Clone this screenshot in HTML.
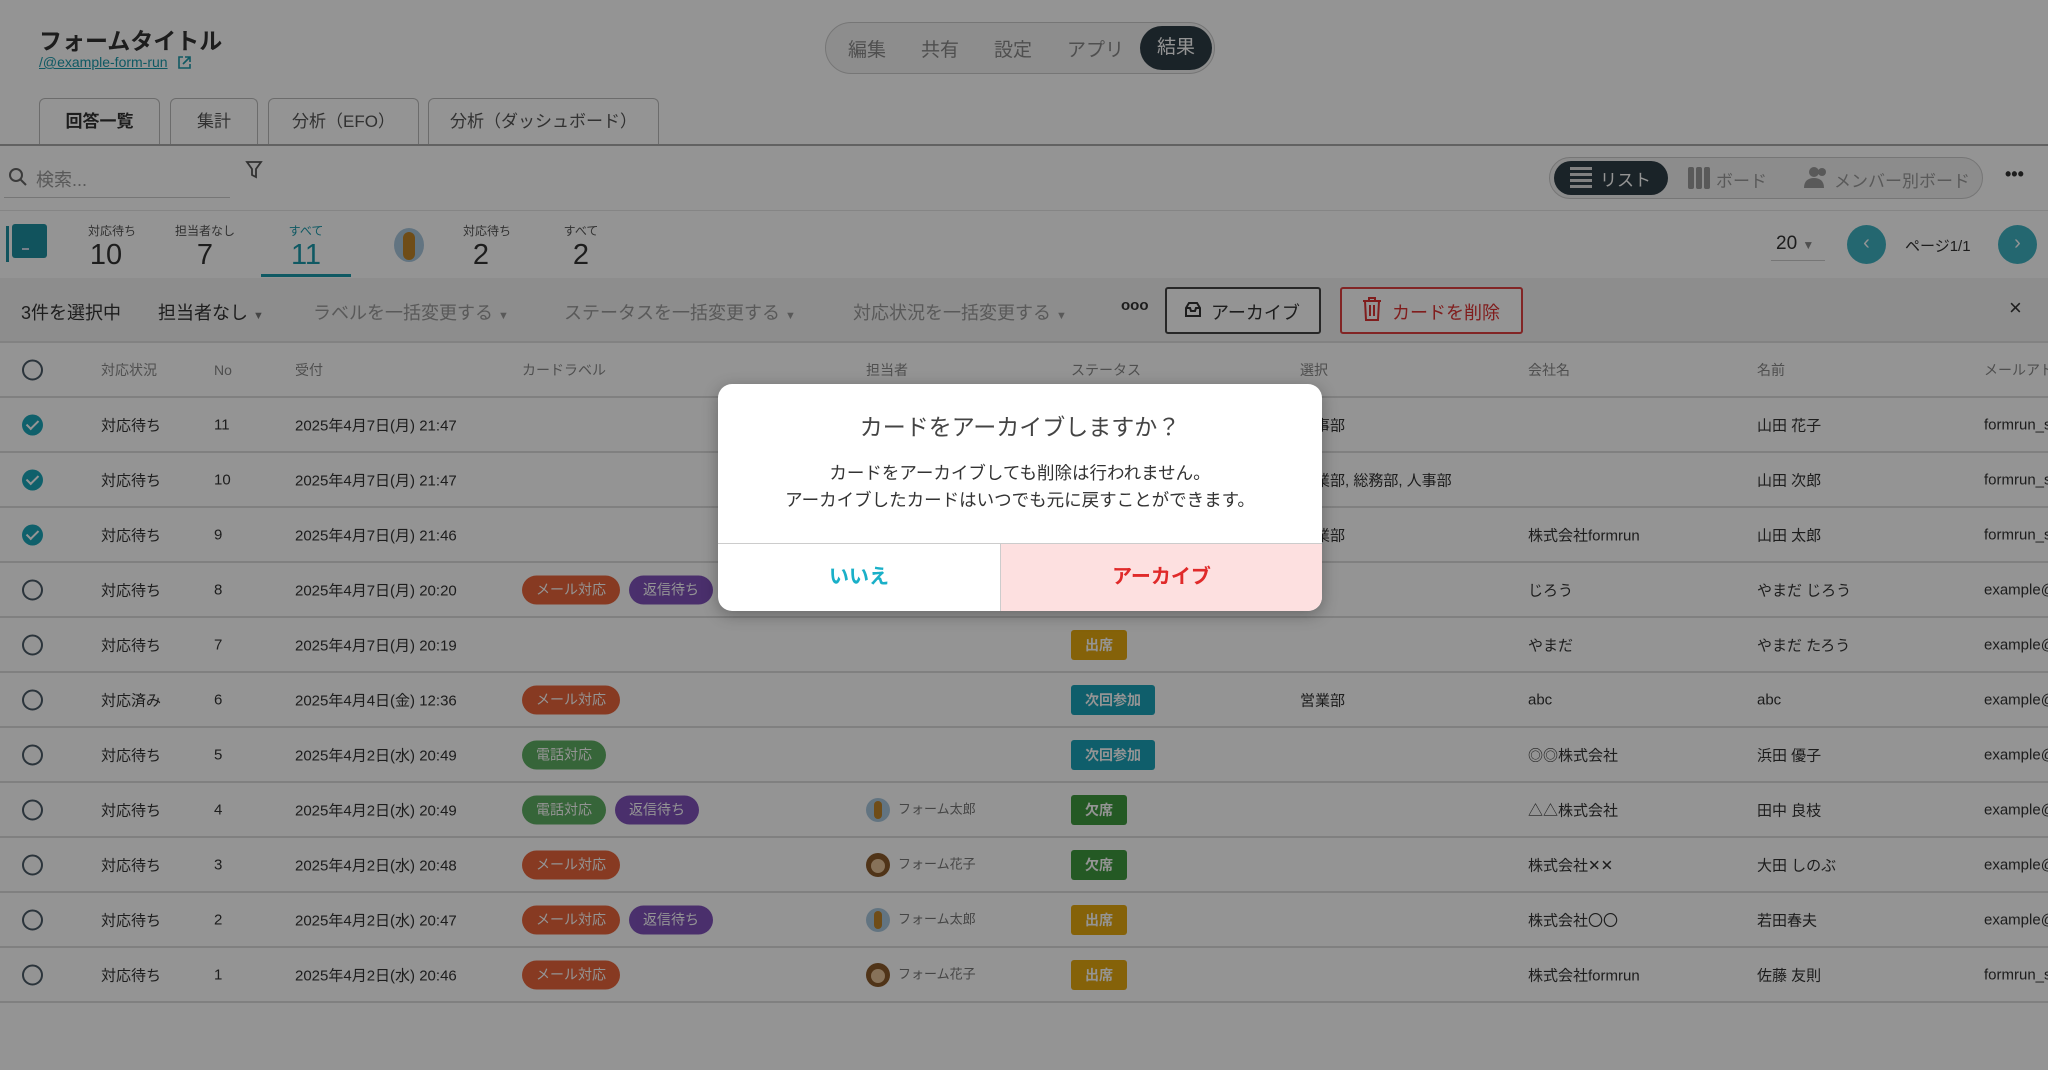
<!DOCTYPE html>
<html><head><meta charset="utf-8"><style>
*{box-sizing:border-box;margin:0;padding:0}
body{width:2048px;height:1070px;overflow:hidden;background:#fff;font-family:"Liberation Sans","Noto Sans CJK JP",sans-serif;color:#333;position:relative}
.a{position:absolute;white-space:nowrap}
.tab{position:absolute;top:98px;height:47px;border:1px solid #bbb;border-bottom:none;border-radius:6px 6px 0 0;background:transparent;font-size:17px;color:#555;text-align:center;line-height:46px}
.row{position:absolute;left:0;width:2048px;height:55px;border-bottom:2px solid #ddd;font-size:15px;color:#333}
.row .a{top:50%;transform:translateY(-50%)}
.chk{width:21px;height:21px;border:2px solid #4a5a66;border-radius:50%}
.chk.on{border:none;background:#1aa6b8}
.chk.on:after{content:"";position:absolute;left:7px;top:3px;width:5px;height:10px;border:solid #fff;border-width:0 2.5px 2.5px 0;transform:rotate(45deg)}
.pl{display:inline-block;height:29px;line-height:29px;border-radius:15px;color:#fff;font-size:14px;padding:0 14px;margin-right:9px;opacity:.85}
.m{background:#e64a19}.r{background:#6a35b0}.t{background:#43a047}
.st{height:30px;line-height:30px;border-radius:3px;color:#fff;font-size:14px;padding:0 14px;font-weight:bold}
.y{background:#e6aa10}.b{background:#1aa3b8}.g{background:#3f9a3f}
.av{width:24px;height:24px;border-radius:50%;display:inline-block;vertical-align:middle;margin-right:8px;position:relative}
.gi{background:#aac9df}.gi:after{content:"";position:absolute;left:8px;top:3px;width:8px;height:18px;border-radius:4px;background:#c0862a}
.mo{background:#8a5a2a}.mo:after{content:"";position:absolute;left:5px;top:6px;width:14px;height:14px;border-radius:50%;background:#e8c49a}
.pers{font-size:13px;color:#777}
.h{font-size:14px;color:#888}
</style></head><body>
<div class="a" style="left:39px;top:22px;font-size:23px;font-weight:bold;color:#333">フォームタイトル</div>
<div class="a" style="left:39px;top:54px;font-size:14px;color:#1a9aab;text-decoration:underline">/@example-form-run</div>
<svg class="a" style="left:177px;top:55px" width="15" height="15" viewBox="0 0 15 15" fill="none" stroke="#1a9aab" stroke-width="1.6"><path d="M6 2H2v11h11V9M8 2h5v5M13 2L6 9"/></svg>
<div class="a" style="left:825px;top:22px;width:390px;height:52px;border:1px solid #ccc;border-radius:26px;background:#f3f3f3"></div>
<div class="a" style="left:848px;top:35px;font-size:19px;color:#888">編集</div>
<div class="a" style="left:921px;top:35px;font-size:19px;color:#888">共有</div>
<div class="a" style="left:994px;top:35px;font-size:19px;color:#888">設定</div>
<div class="a" style="left:1067px;top:35px;font-size:19px;color:#888">アプリ</div>
<div class="a" style="left:1140px;top:26px;width:72px;height:44px;border-radius:22px;background:#2e3d45;color:#fff;font-size:19px;text-align:center;line-height:44px">結果</div>
<div class="tab" style="left:39px;width:121px;background:#fff;color:#333;font-weight:bold;height:48px">回答一覧</div>
<div class="tab" style="left:170px;width:88px">集計</div>
<div class="tab" style="left:268px;width:151px">分析（EFO）</div>
<div class="tab" style="left:428px;width:231px">分析（ダッシュボード）</div>
<div class="a" style="left:0;top:144px;width:2048px;height:2px;background:#aaa"></div>
<svg class="a" style="left:8px;top:167px" width="20" height="20" viewBox="0 0 20 20" fill="none" stroke="#666" stroke-width="2"><circle cx="8" cy="8" r="6"/><path d="M12.5 12.5L18 18"/></svg>
<div class="a" style="left:36px;top:166px;font-size:18px;color:#999">検索...</div>
<div class="a" style="left:4px;top:197px;width:226px;height:1px;background:#ccc"></div>
<svg class="a" style="left:245px;top:160px" width="18" height="20" viewBox="0 0 18 20" fill="none" stroke="#555" stroke-width="1.8"><path d="M2 2h14l-5 7v8l-4-2V9z"/></svg>
<div class="a" style="left:1549px;top:157px;width:434px;height:42px;border:1px solid #ccc;border-radius:21px;background:#f1f1f1"></div>
<div class="a" style="left:1554px;top:161px;width:114px;height:34px;border-radius:17px;background:#2e3d45"></div>
<svg class="a" style="left:1570px;top:166px" width="22" height="24" viewBox="0 0 22 24" fill="#ddd"><rect y="1" width="22" height="3"/><rect y="7" width="22" height="3"/><rect y="13" width="22" height="3"/><rect y="19" width="22" height="3"/></svg>
<div class="a" style="left:1600px;top:166px;font-size:17px;color:#fff">リスト</div>
<svg class="a" style="left:1688px;top:167px" width="22" height="22" viewBox="0 0 22 22" fill="#999"><rect width="6" height="22" rx="2"/><rect x="8" width="6" height="22" rx="2"/><rect x="16" width="6" height="22" rx="2"/></svg>
<div class="a" style="left:1716px;top:167px;font-size:17px;color:#999">ボード</div>
<svg class="a" style="left:1804px;top:166px" width="26" height="24" viewBox="0 0 26 24" fill="#999"><circle cx="10" cy="6" r="5"/><path d="M0 22c0-7 4-10 10-10s10 3 10 10z"/><circle cx="18" cy="6" r="4"/></svg>
<div class="a" style="left:1834px;top:167px;font-size:17px;color:#999">メンバー別ボード</div>
<div class="a" style="left:2005px;top:164px;font-size:18px;font-weight:bold;color:#333">•••</div>
<div class="a" style="left:0;top:210px;width:2048px;height:1px;background:#e5e5e5"></div>
<div class="a" style="left:6px;top:226px;width:3px;height:36px;background:#1e8fa0"></div>
<div class="a" style="left:12px;top:224px;width:35px;height:34px;background:#1e8fa0;border-radius:3px"></div>
<div class="a" style="left:22px;top:248px;width:7px;height:2px;background:#cde"></div>
<div class="a" style="left:88px;top:222px;text-align:center;width:36px;font-size:12px;color:#555">対応待ち<br><span style="font-size:29px;color:#333;line-height:32px">10</span></div>
<div class="a" style="left:173px;top:222px;text-align:center;width:64px;font-size:12px;color:#555">担当者なし<br><span style="font-size:29px;color:#333;line-height:32px">7</span></div>
<div class="a" style="left:286px;top:222px;text-align:center;width:40px;font-size:12px;color:#1a9aab">すべて<br><span style="font-size:29px;line-height:32px">11</span></div>
<div class="a" style="left:261px;top:274px;width:90px;height:3px;background:#1a9aab"></div>
<div class="a" style="left:394px;top:228px;width:30px;height:34px;border-radius:50%;background:#aac9df"></div>
<div class="a" style="left:403px;top:232px;width:12px;height:28px;border-radius:6px;background:#c0862a"></div>
<div class="a" style="left:463px;top:222px;text-align:center;width:36px;font-size:12px;color:#555">対応待ち<br><span style="font-size:29px;color:#333;line-height:32px">2</span></div>
<div class="a" style="left:563px;top:222px;text-align:center;width:36px;font-size:12px;color:#555">すべて<br><span style="font-size:29px;color:#333;line-height:32px">2</span></div>
<div class="a" style="left:1776px;top:233px;font-size:19px;color:#333">20 <span style="font-size:12px;color:#888">▼</span></div>
<div class="a" style="left:1771px;top:260px;width:54px;height:1px;background:#ccc"></div>
<div class="a" style="left:1847px;top:225px;width:39px;height:39px;border-radius:50%;background:#3fb2c2;color:#fff;text-align:center;line-height:37px;font-size:20px">‹</div>
<div class="a" style="left:1905px;top:235px;font-size:15px;color:#333">ページ1/1</div>
<div class="a" style="left:1998px;top:225px;width:39px;height:39px;border-radius:50%;background:#3fb2c2;color:#fff;text-align:center;line-height:37px;font-size:20px">›</div>
<div class="a" style="left:0;top:278px;width:2048px;height:65px;background:#f3f3f3;border-bottom:2px solid #e0e0e0"></div>
<div class="a" style="left:21px;top:299px;font-size:18px;color:#333">3件を選択中</div>
<div class="a" style="left:158px;top:299px;font-size:18px;color:#333">担当者なし <span style="font-size:11px;color:#777">▼</span></div>
<div class="a" style="left:313px;top:299px;font-size:18px;color:#999">ラベルを一括変更する <span style="font-size:11px">▼</span></div>
<div class="a" style="left:564px;top:299px;font-size:18px;color:#999">ステータスを一括変更する <span style="font-size:11px">▼</span></div>
<div class="a" style="left:853px;top:299px;font-size:18px;color:#999">対応状況を一括変更する <span style="font-size:11px">▼</span></div>
<div class="a" style="left:1121px;top:297px;font-size:15px;font-weight:bold;color:#333">ooo</div>
<div class="a" style="left:1165px;top:287px;width:156px;height:47px;border:2px solid #444;border-radius:3px;background:#fff"></div>
<svg class="a" style="left:1184px;top:300px" width="18" height="18" viewBox="0 0 18 18" fill="none" stroke="#333" stroke-width="2"><path d="M2 8h4l1 3h4l1-3h4M2 8v8h14V8L13 3H5z"/></svg>
<div class="a" style="left:1211px;top:299px;font-size:18px;color:#333">アーカイブ</div>
<div class="a" style="left:1340px;top:287px;width:183px;height:47px;border:2px solid #e04040;border-radius:3px;background:#fff"></div>
<svg class="a" style="left:1362px;top:296px" width="20" height="26" viewBox="0 0 20 26" fill="none" stroke="#d33" stroke-width="2"><path d="M1 5h18M7 5V2h6v3M3 5l1 19h12l1-19M8 9v11M12 9v11"/></svg>
<div class="a" style="left:1392px;top:299px;font-size:18px;color:#d33">カードを削除</div>
<div class="a" style="left:2009px;top:295px;font-size:22px;color:#333">×</div>
<div class="row" style="top:343px">
<div class="a chk" style="left:22px"></div><div class="a h" style="left:101px">対応状況</div><div class="a h" style="left:214px">No</div><div class="a h" style="left:295px">受付</div><div class="a h" style="left:522px">カードラベル</div><div class="a h" style="left:866px">担当者</div><div class="a h" style="left:1071px">ステータス</div><div class="a h" style="left:1300px">選択</div><div class="a h" style="left:1528px">会社名</div><div class="a h" style="left:1757px">名前</div><div class="a h" style="left:1984px">メールアドレス</div></div>
<div class="row" style="top:398px"><div class="a chk on" style="left:22px"></div><div class="a" style="left:101px">対応待ち</div><div class="a" style="left:214px">11</div><div class="a" style="left:295px">2025年4月7日(月) 21:47</div><div class="a" style="left:1300px">人事部</div><div class="a" style="left:1757px">山田 花子</div><div class="a" style="left:1984px">formrun_s</div></div>
<div class="row" style="top:453px"><div class="a chk on" style="left:22px"></div><div class="a" style="left:101px">対応待ち</div><div class="a" style="left:214px">10</div><div class="a" style="left:295px">2025年4月7日(月) 21:47</div><div class="a" style="left:1300px">営業部, 総務部, 人事部</div><div class="a" style="left:1757px">山田 次郎</div><div class="a" style="left:1984px">formrun_s</div></div>
<div class="row" style="top:508px"><div class="a chk on" style="left:22px"></div><div class="a" style="left:101px">対応待ち</div><div class="a" style="left:214px">9</div><div class="a" style="left:295px">2025年4月7日(月) 21:46</div><div class="a" style="left:1300px">営業部</div><div class="a" style="left:1528px">株式会社formrun</div><div class="a" style="left:1757px">山田 太郎</div><div class="a" style="left:1984px">formrun_s</div></div>
<div class="row" style="top:563px"><div class="a chk" style="left:22px"></div><div class="a" style="left:101px">対応待ち</div><div class="a" style="left:214px">8</div><div class="a" style="left:295px">2025年4月7日(月) 20:20</div><div class="a" style="left:522px"><span class="pl m">メール対応</span><span class="pl r">返信待ち</span></div><div class="a" style="left:1528px">じろう</div><div class="a" style="left:1757px">やまだ じろう</div><div class="a" style="left:1984px">example@</div></div>
<div class="row" style="top:618px"><div class="a chk" style="left:22px"></div><div class="a" style="left:101px">対応待ち</div><div class="a" style="left:214px">7</div><div class="a" style="left:295px">2025年4月7日(月) 20:19</div><div class="a st y" style="left:1071px">出席</div><div class="a" style="left:1528px">やまだ</div><div class="a" style="left:1757px">やまだ たろう</div><div class="a" style="left:1984px">example@</div></div>
<div class="row" style="top:673px"><div class="a chk" style="left:22px"></div><div class="a" style="left:101px">対応済み</div><div class="a" style="left:214px">6</div><div class="a" style="left:295px">2025年4月4日(金) 12:36</div><div class="a" style="left:522px"><span class="pl m">メール対応</span></div><div class="a st b" style="left:1071px">次回参加</div><div class="a" style="left:1300px">営業部</div><div class="a" style="left:1528px">abc</div><div class="a" style="left:1757px">abc</div><div class="a" style="left:1984px">example@</div></div>
<div class="row" style="top:728px"><div class="a chk" style="left:22px"></div><div class="a" style="left:101px">対応待ち</div><div class="a" style="left:214px">5</div><div class="a" style="left:295px">2025年4月2日(水) 20:49</div><div class="a" style="left:522px"><span class="pl t">電話対応</span></div><div class="a st b" style="left:1071px">次回参加</div><div class="a" style="left:1528px">◎◎株式会社</div><div class="a" style="left:1757px">浜田 優子</div><div class="a" style="left:1984px">example@</div></div>
<div class="row" style="top:783px"><div class="a chk" style="left:22px"></div><div class="a" style="left:101px">対応待ち</div><div class="a" style="left:214px">4</div><div class="a" style="left:295px">2025年4月2日(水) 20:49</div><div class="a" style="left:522px"><span class="pl t">電話対応</span><span class="pl r">返信待ち</span></div><div class="a pers" style="left:866px"><span class="av gi"></span>フォーム太郎</div><div class="a st g" style="left:1071px">欠席</div><div class="a" style="left:1528px">△△株式会社</div><div class="a" style="left:1757px">田中 良枝</div><div class="a" style="left:1984px">example@</div></div>
<div class="row" style="top:838px"><div class="a chk" style="left:22px"></div><div class="a" style="left:101px">対応待ち</div><div class="a" style="left:214px">3</div><div class="a" style="left:295px">2025年4月2日(水) 20:48</div><div class="a" style="left:522px"><span class="pl m">メール対応</span></div><div class="a pers" style="left:866px"><span class="av mo"></span>フォーム花子</div><div class="a st g" style="left:1071px">欠席</div><div class="a" style="left:1528px">株式会社✕✕</div><div class="a" style="left:1757px">大田 しのぶ</div><div class="a" style="left:1984px">example@</div></div>
<div class="row" style="top:893px"><div class="a chk" style="left:22px"></div><div class="a" style="left:101px">対応待ち</div><div class="a" style="left:214px">2</div><div class="a" style="left:295px">2025年4月2日(水) 20:47</div><div class="a" style="left:522px"><span class="pl m">メール対応</span><span class="pl r">返信待ち</span></div><div class="a pers" style="left:866px"><span class="av gi"></span>フォーム太郎</div><div class="a st y" style="left:1071px">出席</div><div class="a" style="left:1528px">株式会社〇〇</div><div class="a" style="left:1757px">若田春夫</div><div class="a" style="left:1984px">example@</div></div>
<div class="row" style="top:948px"><div class="a chk" style="left:22px"></div><div class="a" style="left:101px">対応待ち</div><div class="a" style="left:214px">1</div><div class="a" style="left:295px">2025年4月2日(水) 20:46</div><div class="a" style="left:522px"><span class="pl m">メール対応</span></div><div class="a pers" style="left:866px"><span class="av mo"></span>フォーム花子</div><div class="a st y" style="left:1071px">出席</div><div class="a" style="left:1528px">株式会社formrun</div><div class="a" style="left:1757px">佐藤 友則</div><div class="a" style="left:1984px">formrun_s</div></div>
<div class="a" style="left:0;top:0;width:2048px;height:1070px;background:rgba(0,0,0,.42)"></div>
<div class="a" style="left:718px;top:384px;width:604px;height:227px;background:#fff;border-radius:14px;overflow:hidden;box-shadow:0 4px 16px rgba(0,0,0,.3)">
<div class="a" style="left:0;top:24px;width:604px;text-align:center;font-size:23px;color:#444">カードをアーカイブしますか？</div>
<div class="a" style="left:0;top:76px;width:604px;text-align:center;font-size:17.5px;line-height:27px;color:#333">カードをアーカイブしても削除は行われません。<br>アーカイブしたカードはいつでも元に戻すことができます。</div>
<div class="a" style="left:0;top:159px;width:604px;height:1px;background:#ccc"></div>
<div class="a" style="left:0;top:160px;width:282px;height:67px;text-align:center;line-height:67px;font-size:20px;font-weight:bold;color:#1ab0c8">いいえ</div>
<div class="a" style="left:282px;top:160px;width:322px;height:67px;background:#fde0e0;border-left:1px solid #ccc;text-align:center;line-height:67px;font-size:20px;font-weight:bold;color:#e02a2a">アーカイブ</div>
</div>
</body></html>
